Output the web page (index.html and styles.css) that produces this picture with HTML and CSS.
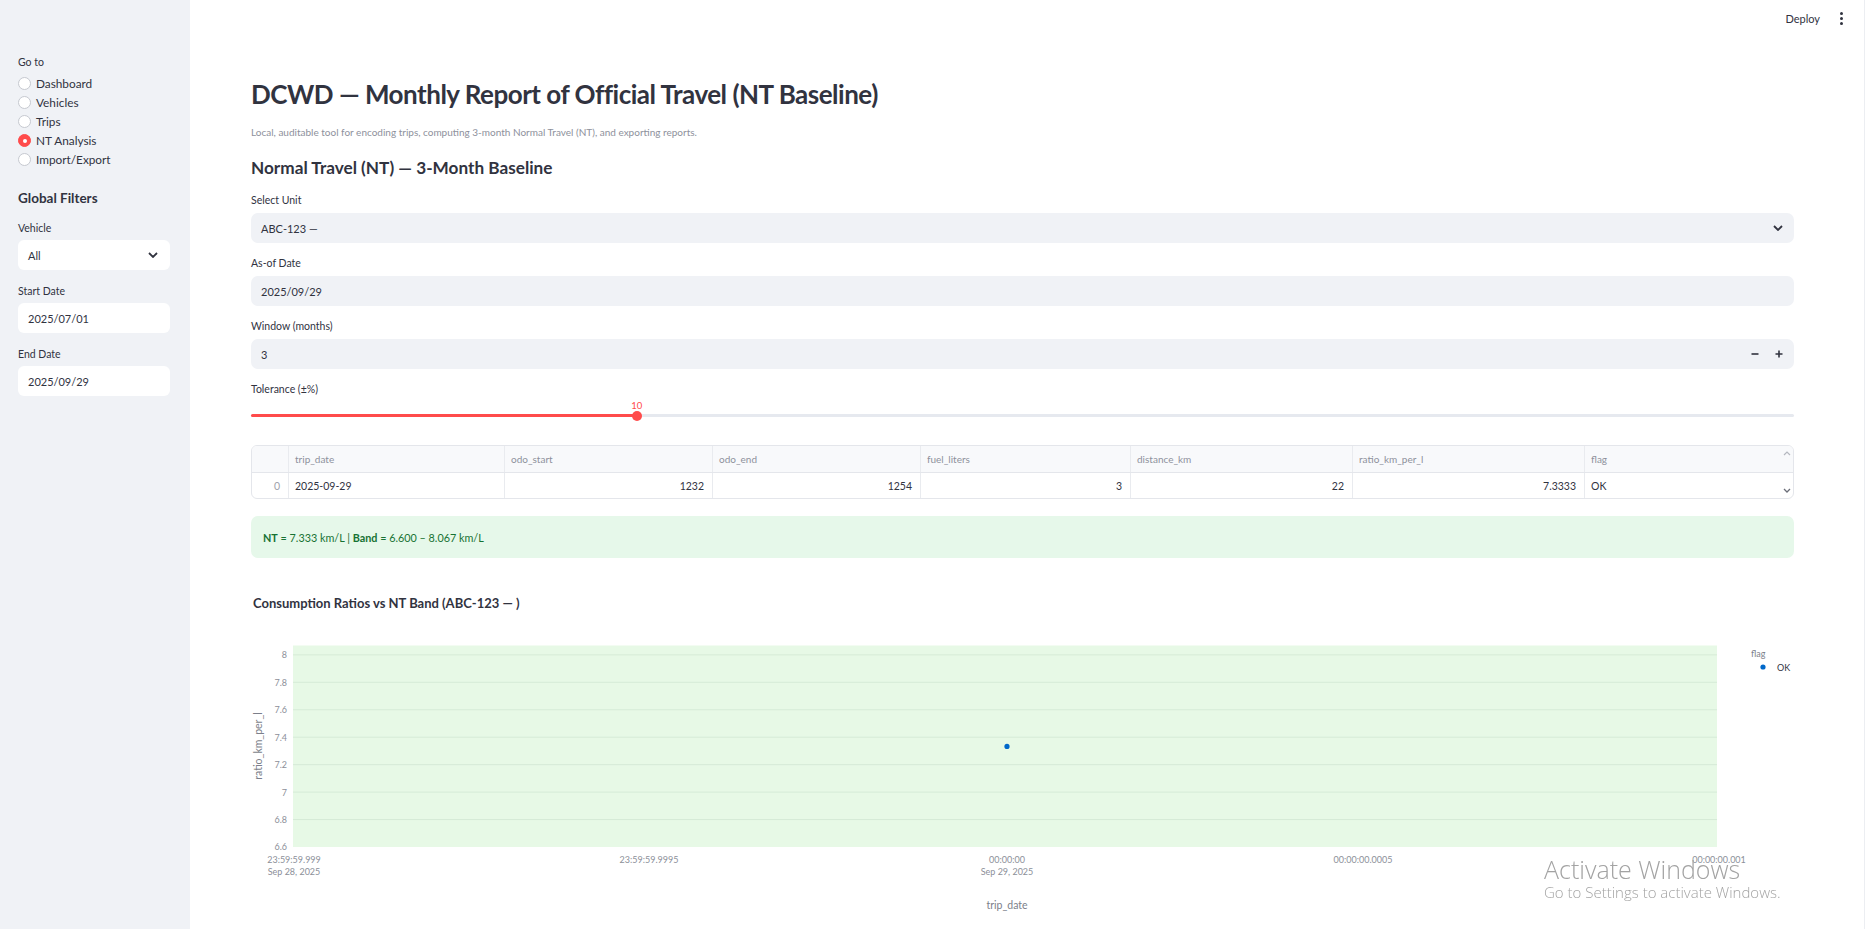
FILE: index.html
```html
<!DOCTYPE html>
<html lang="en">
<head>
<meta charset="utf-8">
<title>DCWD — Monthly Report of Official Travel</title>
<link rel="stylesheet" href="styles.css">
</head>
<body>
<div class="app">
  <aside class="sidebar">
    <div class="lbl">Go to</div>
    <div class="radios">
      <div class="radio"><span class="circle"></span>Dashboard</div>
      <div class="radio"><span class="circle"></span>Vehicles</div>
      <div class="radio"><span class="circle"></span>Trips</div>
      <div class="radio active"><span class="circle"></span>NT Analysis</div>
      <div class="radio"><span class="circle"></span>Import/Export</div>
    </div>
    <div class="sb-title">Global Filters</div>
    <div class="sb-field">
      <div class="lbl">Vehicle</div>
      <div class="sb-input select"><span>All</span>
        <svg class="chev" width="10" height="6" viewBox="0 0 10 6"><path d="M1 1l4 4 4-4" fill="none" stroke="#31333f" stroke-width="1.8"/></svg>
      </div>
    </div>
    <div class="sb-field">
      <div class="lbl">Start Date</div>
      <div class="sb-input"><span>2025/07/01</span></div>
    </div>
    <div class="sb-field">
      <div class="lbl">End Date</div>
      <div class="sb-input"><span>2025/09/29</span></div>
    </div>
  </aside>

  <main class="main">
    <header class="topbar">
      <span class="deploy">Deploy</span>
      <span class="kebab"><i></i><i></i><i></i></span>
    </header>

    <div class="content">
      <h1 class="title">DCWD — Monthly Report of Official Travel (NT Baseline)</h1>
      <p class="caption">Local, auditable tool for encoding trips, computing 3-month Normal Travel (NT), and exporting reports.</p>
      <h2 class="subtitle">Normal Travel (NT) — 3-Month Baseline</h2>

      <div class="field">
        <div class="lbl">Select Unit</div>
        <div class="m-input select"><span>ABC-123 —</span>
          <svg class="chev" width="10" height="6" viewBox="0 0 10 6"><path d="M1 1l4 4 4-4" fill="none" stroke="#31333f" stroke-width="1.8"/></svg>
        </div>
      </div>
      <div class="field">
        <div class="lbl">As-of Date</div>
        <div class="m-input"><span>2025/09/29</span></div>
      </div>
      <div class="field">
        <div class="lbl">Window (months)</div>
        <div class="m-input number"><span>3</span>
          <span class="steppers">
            <svg width="8" height="8" viewBox="0 0 8 8"><path d="M0.5 4h7" stroke="#31333f" stroke-width="1.6"/></svg>
            <svg width="8" height="8" viewBox="0 0 8 8"><path d="M0.5 4h7M4 0.5v7" stroke="#31333f" stroke-width="1.6"/></svg>
          </span>
        </div>
      </div>
      <div class="field">
        <div class="lbl">Tolerance (±%)</div>
        <div class="slider">
          <div class="track"><div class="fill" style="width: 25%"></div></div>
          <div class="thumb" style="left: 25%"><span class="val">10</span></div>
        </div>
      </div>

      <div class="table">
        <div class="trow head">
          <div class="c idx"></div>
          <div class="c">trip_date</div>
          <div class="c">odo_start</div>
          <div class="c">odo_end</div>
          <div class="c">fuel_liters</div>
          <div class="c">distance_km</div>
          <div class="c">ratio_km_per_l</div>
          <div class="c last">flag</div>
          <div class="gutter"><svg width="8" height="6" viewBox="0 0 8 6"><path d="M1 5l3-3 3 3" fill="none" stroke="#b5b8c0" stroke-width="1.2"/></svg></div>
        </div>
        <div class="trow">
          <div class="c idx num">0</div>
          <div class="c">2025-09-29</div>
          <div class="c num">1232</div>
          <div class="c num">1254</div>
          <div class="c num">3</div>
          <div class="c num">22</div>
          <div class="c num">7.3333</div>
          <div class="c last">OK</div>
          <div class="gutter bottom"><svg width="8" height="6" viewBox="0 0 8 6"><path d="M1 1l3 3 3-3" fill="none" stroke="#6b6e78" stroke-width="1.3"/></svg></div>
        </div>
      </div>

      <div class="success"><b>NT</b>&nbsp;= 7.333 km/L |&nbsp;<b>Band</b>&nbsp;= 6.600 – 8.067 km/L</div>

      <div class="chart-title">Consumption Ratios vs NT Band (ABC-123 — )</div>
      <svg class="chart" width="1543" height="300" viewBox="0 0 1543 300">
        <rect x="42" y="26.5" width="1424" height="201.5" fill="#e7f9e6"/>
        <g stroke="#d6ebd7" stroke-width="1">
          <line x1="42" x2="1466" y1="35.85" y2="35.85"/>
          <line x1="42" x2="1466" y1="63.3" y2="63.3"/>
          <line x1="42" x2="1466" y1="90.75" y2="90.75"/>
          <line x1="42" x2="1466" y1="118.2" y2="118.2"/>
          <line x1="42" x2="1466" y1="145.65" y2="145.65"/>
          <line x1="42" x2="1466" y1="173.1" y2="173.1"/>
          <line x1="42" x2="1466" y1="200.55" y2="200.55"/>
        </g>
        <g class="tick" text-anchor="end">
          <text x="36" y="39">8</text>
          <text x="36" y="66.5">7.8</text>
          <text x="36" y="94">7.6</text>
          <text x="36" y="121.5">7.4</text>
          <text x="36" y="149">7.2</text>
          <text x="36" y="176.5">7</text>
          <text x="36" y="204">6.8</text>
          <text x="36" y="231">6.6</text>
        </g>
        <g class="tick" text-anchor="middle">
          <text x="43" y="244">23:59:59.999</text>
          <text x="43" y="255.5">Sep 28, 2025</text>
          <text x="398" y="244">23:59:59.9995</text>
          <text x="756" y="244">00:00:00</text>
          <text x="756" y="255.5">Sep 29, 2025</text>
          <text x="1112" y="244">00:00:00.0005</text>
          <text x="1468" y="244">00:00:00.001</text>
        </g>
        <text class="axis-title" x="756" y="290" text-anchor="middle">trip_date</text>
        <text class="axis-title" transform="translate(11 127) rotate(-90)" text-anchor="middle">ratio_km_per_l</text>
        <circle cx="756" cy="127.4" r="2.6" fill="#0068c9"/>
        <text class="legend-title" x="1500" y="38">flag</text>
        <circle cx="1512" cy="48" r="2.6" fill="#0068c9"/>
        <text class="legend-item" x="1526" y="52">OK</text>
      </svg>
    </div>
  </main>
</div>

<div class="activate">
  <div class="a1">Activate Windows</div>
  <div class="a2">Go to Settings to activate Windows.</div>
</div>
</body>
</html>
```

FILE: styles.css
```css
* { box-sizing: border-box; }

html, body {
  margin: 0;
  height: 100%;
}

body {
  font-family: Lato, "Noto Sans", sans-serif;
  color: #31333f;
  background: #ffffff;
  overflow: hidden;
}

.app {
  display: flex;
  height: 929px;
}

/* ---------- sidebar ---------- */
.sidebar {
  width: 190px;
  flex: none;
  background: #f0f2f6;
  padding: 54px 20px 0 18px;
}

.lbl {
  font-size: 10.5px;
  line-height: 16px;
  color: #31333f;
}

.radios {
  margin-top: 4px;
  display: flex;
  flex-direction: column;
}

.radio {
  height: 19px;
  display: flex;
  align-items: center;
  gap: 5px;
  font-size: 11.8px;
}

.circle {
  width: 13px;
  height: 13px;
  border-radius: 50%;
  border: 1px solid #c6c9d0;
  background: #ffffff;
  flex: none;
}

.radio.active .circle {
  background: #ff4b4b;
  border-color: #ff4b4b;
  display: flex;
  align-items: center;
  justify-content: center;
}

.radio.active .circle::after {
  content: "";
  width: 4px;
  height: 4px;
  border-radius: 50%;
  background: #ffffff;
}

.sb-title {
  margin-top: 19px;
  font-size: 13.5px;
  line-height: 20px;
  font-weight: 700;
}

.sb-field {
  margin-top: 13px;
  display: flex;
  flex-direction: column;
  gap: 4px;
}

.sb-title + .sb-field { margin-top: 12px; }

.sb-input {
  height: 30px;
  background: #ffffff;
  border-radius: 6px;
  display: flex;
  align-items: center;
  justify-content: space-between;
  padding: 0 12px 0 10px;
  font-size: 11px;
}

/* ---------- main ---------- */
.main {
  flex: 1;
  padding: 0 70px 0 61px;
  min-width: 0;
  border-right: 1px solid #eceef2;
}

.topbar {
  height: 36px;
  margin-right: -70px;
  padding-right: 21px;
  display: flex;
  align-items: center;
  justify-content: flex-end;
  gap: 20px;
}

.deploy {
  font-size: 11px;
  color: #31333f;
}

.kebab {
  display: flex;
  flex-direction: column;
  gap: 2px;
}

.kebab i {
  width: 3px;
  height: 3px;
  border-radius: 50%;
  background: #31333f;
}

.content {
  padding-top: 41px;
}

.title {
  margin: 0;
  font-size: 26px;
  line-height: 34px;
  font-weight: 700;
  letter-spacing: -0.5px;
}

.caption {
  margin: 14px 0 0;
  font-size: 10px;
  line-height: 14px;
  color: #8e919c;
}

.subtitle {
  margin: 17px 0 0;
  font-size: 17.2px;
  line-height: 24px;
  font-weight: 700;
}

.field {
  margin-top: 12px;
  display: flex;
  flex-direction: column;
  gap: 5px;
}

.m-input {
  height: 30px;
  background: #f0f2f6;
  border-radius: 7px;
  display: flex;
  align-items: center;
  justify-content: space-between;
  padding: 0 11px 0 10px;
  font-size: 11px;
}

.steppers {
  display: flex;
  gap: 16px;
  align-items: center;
  padding-right: 0;
}

.steppers svg { display: block; }

/* slider */
.slider {
  position: relative;
  padding-top: 14px;
  padding-bottom: 10px;
  margin-top: -2px;
}

.track {
  height: 3px;
  background: #e6e9ef;
  border-radius: 2px;
}

.fill {
  height: 100%;
  background: #ff4b4b;
  border-radius: 2px;
}

.thumb {
  position: absolute;
  top: 10.5px;
  width: 10px;
  height: 10px;
  margin-left: -5px;
  border-radius: 50%;
  background: #ff4b4b;
}

.val {
  position: absolute;
  bottom: 10px;
  left: 50%;
  transform: translateX(-50%);
  font-size: 9.5px;
  color: #ff4b4b;
}

/* table */
.table {
  margin-top: 18px;
  border: 1px solid #e4e6eb;
  border-radius: 6px;
  overflow: hidden;
  font-size: 10.5px;
}

.trow {
  display: grid;
  grid-template-columns: 37px 216px 208px 208px 210px 222px 232px 1fr 12px;
  height: 25px;
}

.trow.head {
  height: 27px;
  background: #f8f9fb;
  color: #8e919c;
  font-size: 10px;
  border-bottom: 1px solid #e4e6eb;
}

.c {
  display: flex;
  align-items: center;
  padding: 0 8px 0 6px;
  border-right: 1px solid #e9ebef;
  white-space: nowrap;
}

.c.last { border-right: none; }

.c.num { justify-content: flex-end; }

.c.idx {
  color: #a0a3ac;
}

.gutter {
  display: flex;
  justify-content: center;
  align-items: flex-start;
  padding-top: 4px;
}

.gutter.bottom {
  align-items: flex-end;
  padding-bottom: 4px;
  padding-top: 0;
}

/* success */
.success {
  margin-top: 17px;
  height: 42px;
  background: #e6f8ea;
  border-radius: 7px;
  display: flex;
  align-items: center;
  padding: 0 12px;
  font-size: 10.8px;
  color: #177233;
  white-space: pre;
}

.success b {
  font-weight: 700;
}

/* chart */
.chart-title {
  margin-top: 37px;
  padding-left: 2px;
  font-size: 13px;
  line-height: 16px;
  font-weight: 700;
}

.chart {
  display: block;
  margin-top: 8px;
  font-family: Lato, "Noto Sans", sans-serif;
}

.tick {
  font-size: 9px;
  fill: #8c8f99;
}

.axis-title {
  font-size: 10.5px;
  fill: #7c7f8a;
}

.legend-title {
  font-size: 9px;
  fill: #7c7f8a;
}

.legend-item {
  font-size: 9px;
  fill: #31333f;
}

/* windows watermark */
.activate {
  position: fixed;
  left: 1544px;
  top: 855px;
  color: #a3a3a3;
  font-family: "Open Sans", "Noto Sans", sans-serif;
  font-weight: 300;
  pointer-events: none;
}

.a1 {
  font-size: 25px;
  line-height: 28px;
}

.a2 {
  font-size: 15px;
  line-height: 18px;
}
```
